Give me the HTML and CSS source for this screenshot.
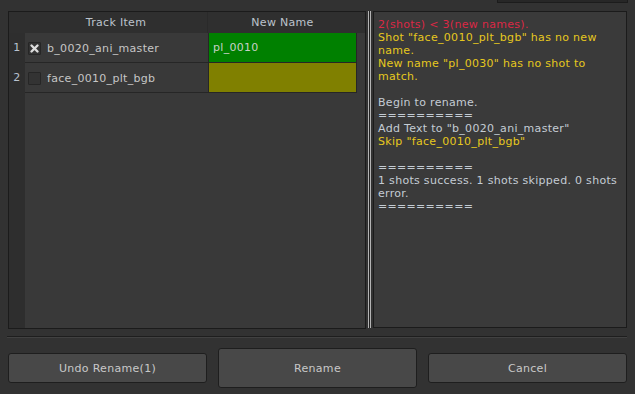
FILE: index.html
```html
<!DOCTYPE html>
<html lang="en">
<head>
    <meta charset="UTF-8">
    <title>Rename Shots</title>
    <link rel="stylesheet" href="styles.css">
</head>
<body>

    <!-- partly visible toolbar above the dialog -->
    <div class="top-strip"></div>

    <div class="main">
        <!-- Shot table -->
        <div class="table-panel">
            <div class="corner"></div>
            <div class="th">Track Item</div>
            <div class="th th-last">New Name</div>
            <div class="th-fill"></div>

            <div class="num">1</div>
            <div class="item">
                <span class="check">
                    <svg width="11" height="11" viewBox="0 0 11 11">
                        <path d="M2.5 2.5 L8.5 8.5 M8.5 2.5 L2.5 8.5" stroke="#dcdcdc" stroke-width="2.4" stroke-linecap="round"/>
                    </svg>
                </span>
                b_0020_ani_master
            </div>
            <div class="name ok">pl_0010</div>
            <div class="fill"></div>

            <div class="num">2</div>
            <div class="item">
                <span class="check"></span>
                face_0010_plt_bgb
            </div>
            <div class="name warn"></div>
            <div class="fill"></div>

            <div class="num-fill"></div>
            <div class="body-fill"></div>
        </div>

        <div class="splitter"><div class="grip"></div></div>

        <!-- Log output -->
        <div class="log">
            <div class="err">2(shots) &lt; 3(new names).</div>
            <div class="warn-text">Shot "face_0010_plt_bgb" has no new name.</div>
            <div class="warn-text">New name "pl_0030" has no shot to match.</div>
            <div>&nbsp;</div>
            <div>Begin to rename.</div>
            <div>==========</div>
            <div>Add Text to "b_0020_ani_master"</div>
            <div class="warn-text">Skip "face_0010_plt_bgb"</div>
            <div>&nbsp;</div>
            <div>==========</div>
            <div>1 shots success. 1 shots skipped. 0 shots error.</div>
            <div>==========</div>
        </div>
    </div>

    <div class="separator"></div>

    <div class="buttons">
        <button class="btn">Undo Rename(1)</button>
        <button class="btn btn-main">Rename</button>
        <button class="btn">Cancel</button>
    </div>

</body>
</html>
```

FILE: styles.css
```css
/* Global */
* {
    margin: 0;
    padding: 0;
    box-sizing: border-box;
}

body {
    background-color: #323232;
    font-family: "DejaVu Sans", "Noto Sans", sans-serif;
    font-size: 11px;
    letter-spacing: 0.3px;
    color: #c8c8c8;
    width: 635px;
    height: 394px;
    overflow: hidden;
    position: relative;
}

.top-strip {
    position: absolute;
    top: 0;
    left: 497px;
    width: 131px;
    height: 3px;
    background-color: #272727;
    border: 1px solid #1c1c1c;
    border-top: none;
}

.main {
    display: flex;
    padding: 11px 8px 0 8px;
    height: 329px;
}

/* Table */
.table-panel {
    width: 358px;
    border: 1px solid #1b1b1b;
    background-color: #393939;
    display: grid;
    grid-template-columns: 16px 183px 149px 1fr;
    grid-template-rows: 21px 30px 30px 1fr;
}

.corner, .th, .th-fill {
    background-color: #2f2f2f;
}

.th {
    color: #bcc3cc;
    text-align: center;
    line-height: 22px;
    border-right: 1px solid #2a2a2a;
}

.th-last {
    border-right: none;
}

.num, .num-fill {
    background-color: #2e2e2e;
}

.num {
    color: #b8c2ce;
    text-align: center;
    line-height: 30px;
    border-bottom: 1px solid #2e2e2e;
}

.item {
    display: flex;
    align-items: center;
    gap: 6px;
    padding: 1px 0 0 3px;
    color: #c6c6c6;
    border-bottom: 1px solid #262626;
    background-color: #393939;
}

.check {
    width: 13px;
    height: 13px;
    border: 1px solid #262626;
    background-color: #333333;
    border-radius: 1px;
    display: flex;
    align-items: center;
    justify-content: center;
}

.name {
    border: 1px solid #262626;
    border-top: none;
    padding-left: 4px;
    line-height: 29px;
    color: #c8d0c8;
}

.ok {
    background-color: #008000;
}

.warn {
    background-color: #808000;
}

.fill {
    border-bottom: 1px solid #393939;
}

.body-fill {
    grid-column: 2 / 5;
}

/* Splitter */
.splitter {
    width: 7px;
    padding: 0 1px 0 2px;
}

.grip {
    width: 3px;
    height: 317px;
    border-left: 1px solid #b4b4b4;
    border-right: 1px solid #b4b4b4;
    background-color: #222;
}

/* Log panel */
.log {
    width: 254px;
    height: 317px;
    border: 1px solid #1b1b1b;
    background-color: #3a3a3a;
    padding: 6px 3px 0 4px;
    line-height: 13px;
    color: #c4ccd4;
}

.err {
    color: #dc2846;
}

.warn-text {
    color: #e6c81e;
}

/* Bottom */
.separator {
    margin: 7px 8px 0 7px;
    border-top: 1px solid #1e1e1e;
    border-bottom: 1px solid #414141;
}

.buttons {
    display: flex;
    align-items: center;
    gap: 11px;
    padding: 2px 8px 0 8px;
    height: 58px;
}

.btn {
    flex: 1;
    height: 30px;
    background-color: #484848;
    border: 1px solid #1e1e1e;
    border-radius: 3px;
    color: #c8c8c8;
    font-family: "DejaVu Sans", "Noto Sans", sans-serif;
    font-size: 11px;
    letter-spacing: 0.3px;
}

.btn-main {
    height: 40px;
}
```
